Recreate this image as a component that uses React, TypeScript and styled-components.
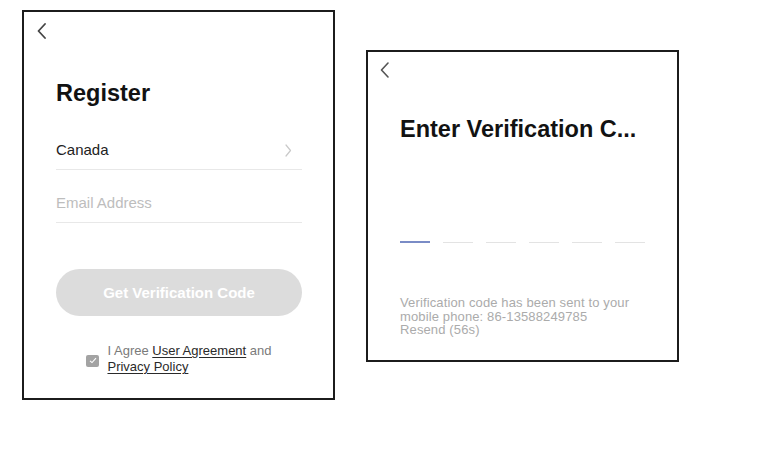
import React from 'react';
import styled, { createGlobalStyle } from 'styled-components';

const GlobalStyle = createGlobalStyle`
    html, body {
        margin: 0;
        padding: 0;
        background: #fff;
        font-family: "Liberation Sans", Arial, sans-serif;
    }
`;

const Page = styled.div`
    width: 777px;
    height: 451px;
    display: flex;
    align-items: flex-start;
    padding-left: 22px;
    gap: 31px;
    box-sizing: border-box;
`;

const Panel = styled.section<{ $top: number; $height: number }>`
    margin-top: ${({ $top }) => $top}px;
    width: 313px;
    height: ${({ $height }) => $height}px;
    box-sizing: border-box;
    border: 2px solid #1c1c1c;
    background: #fff;
    display: flex;
    flex-direction: column;
    padding: 0 31px 0 32px;
`;

const BackBtn = styled.button<{ $x: number; $y: number; $color: string }>`
    align-self: flex-start;
    margin: ${({ $y }) => $y}px 0 0 ${({ $x }) => $x - 32}px;
    padding: 0;
    border: none;
    background: none;
    height: 16px;
    display: flex;
    color: ${({ $color }) => $color};
`;

const Title = styled.h1<{ $gap: number }>`
    margin: ${({ $gap }) => $gap}px 0 0;
    font-size: 23.5px;
    line-height: 28px;
    font-weight: 700;
    color: #121212;
    white-space: nowrap;
`;

const FieldRow = styled.div<{ $top: number }>`
    display: flex;
    align-items: center;
    justify-content: space-between;
    padding: ${({ $top }) => $top}px 10px 9px 0;
    border-bottom: 1px solid #e8e8e8;
    font-size: 15px;
    line-height: 20px;
`;

const FieldText = styled.span<{ $placeholder?: boolean }>`
    color: ${({ $placeholder }) => ($placeholder ? '#bdbdbd' : '#222')};
`;

const FieldArrow = styled.span`
    display: flex;
    color: #c9c9c9;
`;

const MainBtn = styled.button`
    margin-top: 46px;
    height: 47px;
    width: 100%;
    border: none;
    border-radius: 24px;
    background: #dcdcdc;
    color: #fff;
    font-family: inherit;
    font-size: 15px;
    font-weight: 700;
`;

const Agreement = styled.div`
    margin-top: 27px;
    display: flex;
    align-items: center;
    justify-content: center;
    gap: 8px;
`;

const CheckBox = styled.span`
    width: 13px;
    height: 12px;
    margin-top: 3px;
    border-radius: 2px;
    background: #a3a3a3;
    display: flex;
    align-items: center;
    justify-content: center;
`;

const AgreeText = styled.p`
    margin: 0;
    font-size: 13px;
    line-height: 16px;
    color: #7a7a7a;
`;

const Link = styled.a`
    color: #2a2a2a;
    text-decoration: underline;
    text-underline-offset: 2px;
`;

const CodeRow = styled.div`
    margin-top: 98px;
    display: flex;
    gap: 13px;
    width: 245px;
`;

const CodeSlot = styled.span<{ $active?: boolean }>`
    flex: 1;
    height: 2px;
    display: flex;
    align-items: center;

    &::after {
        content: '';
        width: 100%;
        height: ${({ $active }) => ($active ? 2 : 1)}px;
        background: ${({ $active }) => ($active ? '#7a8cc6' : '#e3e3e3')};
    }
`;

const Message = styled.p`
    margin: 53px 0 0;
    font-size: 13px;
    line-height: 13.5px;
    letter-spacing: 0.13px;
    color: #ababab;
`;

const Chevron = ({ dir, w, h, stroke }: { dir: 'left' | 'right'; w: number; h: number; stroke: number }) => (
    <svg width={w} height={h} viewBox={`0 0 ${w} ${h}`} fill="none">
        <path
            d={dir === 'left'
                ? `M${w - 1} 1 L1.5 ${h / 2} L${w - 1} ${h - 1}`
                : `M1 1 L${w - 1.5} ${h / 2} L1 ${h - 1}`}
            stroke="currentColor"
            strokeWidth={stroke}
            strokeLinecap="round"
            strokeLinejoin="round"
        />
    </svg>
);

const App = () => (
    <>
        <GlobalStyle />
        <Page>
            <Panel $top={10} $height={390}>
                <BackBtn $x={13} $y={11} $color="#444">
                    <Chevron dir="left" w={9} h={16} stroke={1.8} />
                </BackBtn>
                <Title $gap={40}>Register</Title>
                <FieldRow $top={33}>
                    <FieldText>Canada</FieldText>
                    <FieldArrow>
                        <Chevron dir="right" w={7} h={13} stroke={1.2} />
                    </FieldArrow>
                </FieldRow>
                <FieldRow $top={23}>
                    <FieldText $placeholder>Email Address</FieldText>
                </FieldRow>
                <MainBtn>Get Verification Code</MainBtn>
                <Agreement>
                    <CheckBox>
                        <svg width="8" height="7" viewBox="0 0 8 7" fill="none">
                            <path d="M1 3.8 L3 5.6 L7 1.2" stroke="#fff" strokeWidth="1.1" />
                        </svg>
                    </CheckBox>
                    <AgreeText>
                        I Agree <Link>User Agreement</Link> and
                        <br />
                        <Link>Privacy Policy</Link>
                    </AgreeText>
                </Agreement>
            </Panel>
            <Panel $top={50} $height={312}>
                <BackBtn $x={12} $y={10} $color="#555">
                    <Chevron dir="left" w={9} h={16} stroke={1.6} />
                </BackBtn>
                <Title $gap={37}>Enter Verification C...</Title>
                <CodeRow>
                    {[0, 1, 2, 3, 4, 5].map(i => <CodeSlot key={i} $active={i === 0} />)}
                </CodeRow>
                <Message>
                    Verification code has been sent to your
                    <br />
                    mobile phone: 86-13588249785
                    <br />
                    Resend (56s)
                </Message>
            </Panel>
        </Page>
    </>
);

export default App;
